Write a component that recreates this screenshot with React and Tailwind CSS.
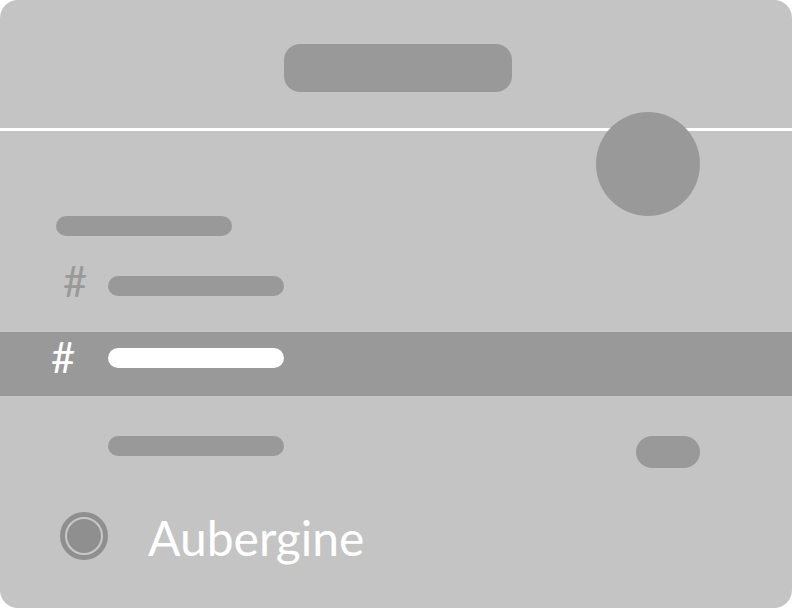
import React from "react";

const Bar = ({ className = "" }) => (
  <div className={`h-[20px] w-[176px] rounded-full ${className}`} />
);

export default function App() {
  return (
    <div className="w-[792px] h-[608px] bg-white">
      <div
        className="relative w-[792px] h-[608px] rounded-[18px] bg-[#c4c4c4] overflow-hidden"
        style={{ fontFamily: "Lato, 'Open Sans', sans-serif" }}
      >
        {/* Header */}
        <div className="h-[128px] pt-[44px] pl-[284px]">
          <div className="w-[228px] h-[48px] rounded-[16px] bg-[#999999]" />
        </div>
        <div className="h-[3px] bg-white" />

        {/* Avatar circle overlapping the divider */}
        <div className="absolute left-[596px] top-[112px] w-[104px] h-[104px] rounded-full bg-[#999999]" />

        {/* Sidebar list */}
        <div className="pt-[85px]">
          <Bar className="ml-[56px] bg-[#999999]" />

          <div className="flex items-start h-[60px] pt-[20px] mt-[20px]">
            <span className="w-[108px] pl-[63px] -mt-[16px] text-[42px] leading-[42px] text-[#999999]">#</span>
            <Bar className="bg-[#999999]" />
          </div>

          <div className="flex items-start h-[64px] bg-[#999999] pt-[16px] mt-[16px]">
            <span className="w-[108px] pl-[51px] -mt-[12px] text-[42px] leading-[42px] text-white">#</span>
            <Bar className="bg-white" />
          </div>

          <div className="flex items-start justify-between h-[32px] mt-[40px] pl-[108px] pr-[92px]">
            <Bar className="bg-[#999999]" />
            <div className="w-[64px] h-[32px] rounded-full bg-[#999999]" />
          </div>

          {/* Theme option */}
          <div className="flex items-start mt-[44px] pl-[60px]">
            <div className="w-[48px] h-[48px] rounded-full border-[5px] border-[#8f8f8f] bg-[#c8c8c8] p-[2px]">
              <div className="w-full h-full rounded-full bg-[#8f8f8f]" />
            </div>
            <span className="ml-[40px] mt-[2px] text-[48px] leading-none text-white">Aubergine</span>
          </div>
        </div>
      </div>
    </div>
  );
}
